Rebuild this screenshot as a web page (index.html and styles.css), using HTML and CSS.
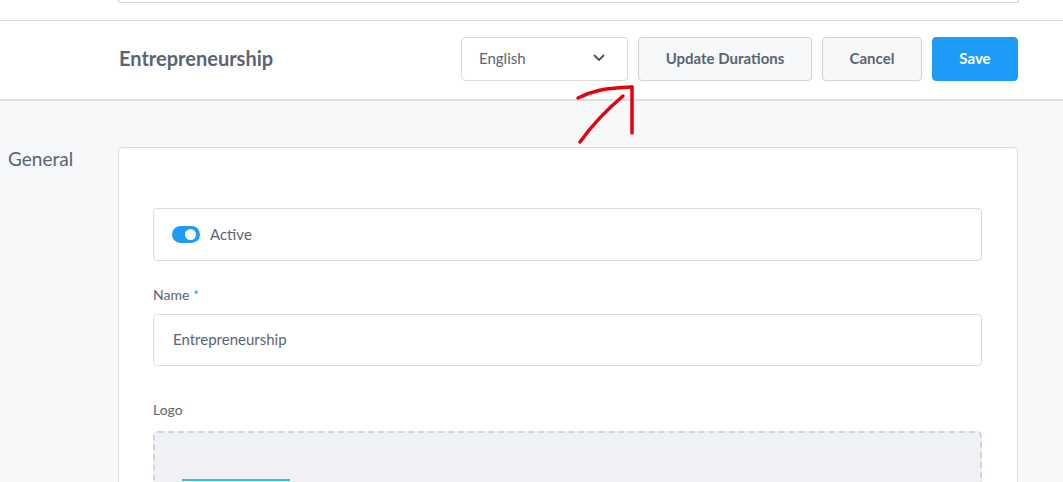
FILE: index.html
```html
<!DOCTYPE html>
<html lang="en">
<head>
<meta charset="utf-8">
<title>Entrepreneurship</title>
<link rel="stylesheet" href="styles.css">
</head>
<body>
<div class="top-strip">
  <div class="prev-card"></div>
</div>
<header class="header">
  <h1 class="title">Entrepreneurship</h1>
  <div class="actions">
    <div class="select">
      <span>English</span>
      <svg class="chev" width="12" height="8" viewBox="0 0 12 8"><path d="M1.5 1.5 L6 6 L10.5 1.5" fill="none" stroke="#4a5260" stroke-width="1.8" stroke-linecap="round" stroke-linejoin="round"/></svg>
    </div>
    <button class="btn btn-light btn-update">Update Durations</button>
    <button class="btn btn-light btn-cancel">Cancel</button>
    <button class="btn btn-primary">Save</button>
  </div>
</header>
<main class="main">
  <div class="section-label">General</div>
  <section class="card">
    <div class="active-box">
      <span class="toggle"><span class="knob"></span></span>
      <span class="active-text">Active</span>
    </div>
    <label class="field-label">Name <span class="req">*</span></label>
    <div class="input">Entrepreneurship</div>
    <label class="field-label logo-label">Logo</label>
    <div class="dropzone">
      <div class="upload-btn"></div>
    </div>
  </section>
</main>
<svg class="annotation" width="80" height="70" viewBox="0 0 80 70">
  <path d="M8 16 C 22 9, 34 6, 62 5" fill="none" stroke="#e8000b" stroke-width="3.5" stroke-linecap="round"/>
  <path d="M62 5 L62 51" fill="none" stroke="#e8000b" stroke-width="3.5" stroke-linecap="round"/>
  <path d="M10 60 C 20 46, 34 30, 53 14" fill="none" stroke="#e8000b" stroke-width="3.5" stroke-linecap="round"/>
</svg>
</body>
</html>
```

FILE: styles.css
```css
* { box-sizing: border-box; }
html, body { margin: 0; padding: 0; }
body {
  background: #f7f8fa;
  font-family: "Lato", "Open Sans", sans-serif;
  color: #5b6472;
  width: 1063px;
  height: 482px;
  overflow: hidden;
  position: relative;
}
.top-strip {
  background: #ffffff;
  height: 21px;
  border-bottom: 1px solid #dcdde0;
  padding-left: 118px;
}
.prev-card {
  width: 901px;
  height: 3px;
  border: 1px solid #d3d4d7;
  border-top: none;
  border-radius: 0 0 4px 4px;
}
.header {
  background: #ffffff;
  height: 80px;
  border-bottom: 2px solid #dcdfe3;
  display: flex;
  align-items: center;
  padding: 0 45px 2px 119px;
}
.title {
  margin: 0 0 2px;
  font-size: 20px;
  font-weight: 700;
  color: #5b6472;
}
.actions {
  margin-left: auto;
  display: flex;
  gap: 10px;
}
.select {
  width: 167px;
  height: 44px;
  border: 1px solid #d9dbdf;
  border-radius: 4px;
  background: #fff;
  display: flex;
  align-items: center;
  justify-content: space-between;
  padding: 0 22px 2px 17px;
  font-size: 15px;
  color: #5b6472;
}
.btn {
  height: 44px;
  border-radius: 4px;
  font-family: inherit;
  font-size: 15px;
  font-weight: 700;
  padding: 0 0 2px;
  cursor: pointer;
}
.btn-light {
  background: #f7f8fa;
  border: 1px solid #cfd2d7;
  color: #5b6472;
}
.btn-update { width: 174px; }
.btn-cancel { width: 100px; }
.btn-primary {
  width: 86px;
  background: #1d9bf6;
  border: 1px solid #1d9bf6;
  color: #ffffff;
}
.main {
  display: grid;
  grid-template-columns: 110px 900px;
  padding: 46px 0 0 8px;
}
.section-label {
  font-size: 19px;
  line-height: 24px;
  color: #5b6472;
}
.card {
  background: #fff;
  border: 1px solid #dcdde0;
  border-radius: 4px;
  padding: 60px 35px 0 34px;
  height: 400px;
}
.active-box {
  height: 53px;
  border: 1px solid #d9dbdf;
  border-radius: 4px;
  display: flex;
  align-items: center;
  padding: 0 18px;
  gap: 10px;
}
.toggle {
  width: 28px;
  height: 17px;
  border-radius: 9px;
  background: #1d9bf6;
  position: relative;
  display: inline-block;
}
.knob {
  position: absolute;
  width: 11px;
  height: 11px;
  border-radius: 50%;
  background: #fff;
  top: 3px;
  right: 4px;
}
.active-text { font-size: 15px; margin-bottom: 2px; }
.field-label {
  display: block;
  margin-top: 24px;
  line-height: 20px;
  font-size: 14px;
  color: #5b6472;
}
.req { color: #1d9bf6; }
.input {
  margin-top: 9px;
  height: 52px;
  border: 1px solid #d9dbdf;
  border-radius: 4px;
  display: flex;
  align-items: center;
  padding: 0 0 2px 19px;
  font-size: 15px;
}
.logo-label { margin-top: 34px; }
.dropzone {
  margin-top: 11px;
  height: 120px;
  background: #f0f1f4;
  border: 2px dashed #cdd5df;
  border-radius: 5px;
  padding: 46px 0 0 27px;
}
.upload-btn {
  width: 108px;
  height: 40px;
  border-top: 2px solid #3dbfd2;
}
.annotation {
  position: absolute;
  left: 570px;
  top: 82px;
}
```
